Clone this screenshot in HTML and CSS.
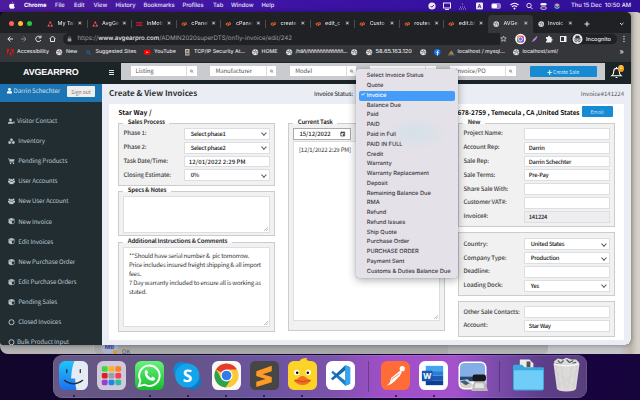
FILE: index.html
```html
<!DOCTYPE html>
<html lang="en">
<head>
<meta charset="utf-8">
<title>AVGEARPRO - Create &amp; View Invoices</title>
<link rel="stylesheet" href="styles.css">
</head>
<body>
<svg class="defs" aria-hidden="true">
  <symbol id="cp" viewBox="0 0 14 10"><path d="M7 3H4.500a2.200 2.200 0 0 0 0 4.400H6M7 9l1.800-7H10a2.200 2.200 0 0 1 0 4.400H8.500" fill="none" stroke="#ff6c2c" stroke-width="2"/></symbol>
  <symbol id="globe" viewBox="0 0 12 12"><circle cx="6" cy="6" r="5.700" fill="#e3e5e8"/><path d="M1.500 4l3 .5 1 2L4 8 3 10M7 1.500L6 3.500l2 1.500 2.500-1M8 7l2 .5L8.500 10" fill="none" stroke="#4b4d51" stroke-width="1.400"/></symbol>
  <symbol id="tri" viewBox="0 0 12 12"><path d="M6 0l3 5H3zM3 6l3 5H0zM9 6l3 5H6z" fill="#f0525a"/></symbol>
  <symbol id="mag" viewBox="0 0 12 12"><circle cx="5" cy="5" r="3.500" fill="none" stroke="currentColor" stroke-width="1.600"/><path d="M7.500 7.500L11 11" stroke="currentColor" stroke-width="2"/></symbol>
  <symbol id="cube" viewBox="0 0 12 12"><path d="M6 0l5.500 2v7L6 12 .5 9V2z" fill="#b8c7ce"/><path d="M6.800 6l4-1.700v4L6.800 10.500z" fill="#222d32"/><path d="M1.500 3L6 5l4.500-2" fill="none" stroke="#222d32" stroke-width=".7"/></symbol>
  <symbol id="ring" viewBox="0 0 12 12"><circle cx="6" cy="6" r="4.700" fill="none" stroke="#b8c7ce" stroke-width="1.800"/></symbol>
  <symbol id="users" viewBox="0 0 14 12"><g fill="#b8c7ce"><circle cx="3" cy="2.500" r="2"/><circle cx="11" cy="2.500" r="2"/><circle cx="7" cy="4" r="2.600"/><path d="M0 8V5h4l1 2-2 2H1zM14 8V5h-4L9 7l2 2h2zM3 12V8.500L5 7h4l2 1.500V12z"/></g></symbol>
  <symbol id="grip" viewBox="0 0 6 6"><path d="M0 6L6 0M3 6l3-3" stroke="#888" stroke-width=".8"/></symbol>
</svg>

<header class="menubar">
  <svg class="apple" viewBox="0 0 12 14"><path d="M8 0c.2 1.500-1 3-2.300 3C5.500 1.500 7 .3 8 0zM6 4c.8 0 1.500-.7 2.800-.7 1 0 1.900.5 2.400 1.300C9 6 9.300 9 11.600 10 11 11.800 9.700 13.700 8.500 13.700c-.9 0-1.300-.5-2.300-.5s-1.500.5-2.300.5C2 13.700.3 10.500.3 7.800.3 5 2 3.400 3.800 3.400 4.800 3.400 5.500 4 6 4z" fill="#fff"/></svg>
  <b class="m1">Chrome</b><span class="m2">File</span><span class="m3">Edit</span><span class="m4">View</span><span class="m5">History</span><span class="m6">Bookmarks</span><span class="m7">Profiles</span><span class="m8">Tab</span><span class="m9">Window</span><span class="m10">Help</span>
  <svg class="tray" viewBox="0 0 136 10"><g fill="none" stroke="#eee"><circle cx="4" cy="5" r="3.600" fill="#eee" stroke="none"/><path d="M2.500 5l1.200 1.200L6 4" stroke="#4a20a5" stroke-width="1"/><rect x="15.500" y="2" width="7" height="5"/><path d="M17 8.500h4"/><path d="M31 8h8M32 6h6M34 3h2" stroke-dasharray="1 1" opacity=".65"/></g><rect x="48" y="1.500" width="7" height="7" rx="1" fill="#eee"/><path d="M50 7l1.500-4L53 7M50.600 5.700h1.800" fill="none" stroke="#3c199b" stroke-width=".8"/><rect x="63.500" y="2.500" width="9" height="5" rx="1.500" fill="#8e78cb" stroke="#b6a6e0" stroke-width=".7"/><rect x="64" y="3" width="5" height="4" rx="1" fill="#fff"/><path d="M82.500 4q4-3.500 8 0M84 5.800q2.500-2 5 0" fill="none" stroke="#fff" stroke-width="1.100"/><circle cx="86.500" cy="7.500" r="1" fill="#fff"/><circle cx="101" cy="4.500" r="2.200" fill="none" stroke="#eee" stroke-width=".9"/><path d="M102.600 6.200l2 2" stroke="#eee"/><rect x="112.500" y="2" width="6" height="2.500" rx="1.200" fill="#eee"/><rect x="112.800" y="5.800" width="5.500" height="2.500" rx="1.200" fill="none" stroke="#eee" stroke-width=".8"/><circle cx="129" cy="5.200" r="3" fill="#344b8f"/><path d="M126.500 4q2.500-3 5 0l-2 2z" fill="#f08bc0"/><path d="M126.500 6q2.500 3 5 0" fill="none" stroke="#4be0e4"/></svg>
  <span class="clock">Thu 15 Dec&nbsp; 10:50 AM</span>
</header>

<div class="backwin back-right"></div>
<div class="backwin back-left"></div>
<div class="backwin back-chat"><span class="mb">MB</span><i class="dot"></i><span class="chat">Milan B<br>OK</span><span class="wed">Wed</span></div>

<main class="window">
  <div class="tabs">
    <div class="lights"><i class="red"></i><i class="yel"></i><i class="grn"></i></div>
    <div class="tab"><svg class="fv"><use href="#tri"/></svg><span>My Tas</span><em>✕</em></div>
    <div class="tab"><svg class="fv"><use href="#tri"/></svg><span>AvgGe</span><em>✕</em></div>
    <div class="tab"><svg class="fv" viewBox="0 0 12 12"><path d="M0 2h12v3H0zM0 7h12v3H0z" fill="#b4202c"/></svg><span>InMoti</span><em>✕</em></div>
    <div class="tab"><svg class="fv"><use href="#cp"/></svg><span>cPanel</span><em>✕</em></div>
    <div class="tab"><svg class="fv"><use href="#cp"/></svg><span>cPanel</span><em>✕</em></div>
    <div class="tab"><svg class="fv"><use href="#cp"/></svg><span>create</span><em>✕</em></div>
    <div class="tab"><svg class="fv"><use href="#cp"/></svg><span>edit_c</span><em>✕</em></div>
    <div class="tab"><svg class="fv"><use href="#cp"/></svg><span>Custo</span><em>✕</em></div>
    <div class="tab"><svg class="fv"><use href="#cp"/></svg><span>routes</span><em>✕</em></div>
    <div class="tab"><svg class="fv"><use href="#cp"/></svg><span>edit.bl</span><em>✕</em></div>
    <div class="tab active"><svg class="fv"><use href="#globe"/></svg><span>AVGe</span><em>✕</em></div>
    <div class="tab"><svg class="fv"><use href="#globe"/></svg><span>Invoic</span><em>✕</em></div>
    <svg class="tabend" viewBox="0 0 50 10"><path d="M3.500 5h5M6 2.500v5M39 4l1.700 1.700L42.400 4" fill="none" stroke="#e8eaed" stroke-width="1"/></svg>
  </div>
  <div class="toolbar">
    <svg class="nav" viewBox="0 0 60 12"><g fill="none" stroke="#e6e7e9" stroke-width="1"><path d="M13 6H8M10.300 3.500L7.800 6l2.500 2.500"/><path d="M21 6h5M23.500 3.500L26 6l-2.500 2.500" stroke="#85878a"/><path d="M40.500 4.200a2.700 2.700 0 1 0 .4 2.800M41 2.500v2.300h-2.300"/><path d="M49.500 6L52.500 3l3 3M50.500 5.500v3h4v-3"/></g></svg>
    <div class="url"><svg class="lock" viewBox="0 0 8 10"><rect x="1" y="4" width="6" height="5" fill="#9aa0a6"/><path d="M2.500 4V2.500a1.500 1.500 0 0 1 3 0V4" fill="none" stroke="#9aa0a6"/></svg><span>https://<strong>www.avgearpro.com</strong>/ADMIN2020superDTS/onfly-invoice/edit/242</span></div>
    <svg class="ext" viewBox="0 0 131 12"><path d="M3 3l.8 1.800 2 .2-1.500 1.300.5 2L3 7.300 1.200 8.300l.5-2L.2 5l2-.2z" transform="translate(.5)" fill="none" stroke="#dadce0" stroke-width=".7"/><circle cx="20.500" cy="6" r="5.300" fill="#fff"/><rect x="17" y="2.500" width="7" height="7" rx="2" fill="#e94389"/><path d="M17 6V4.500a2 2 0 0 1 2-2h1.500z" fill="#ffae36"/><path d="M20.500 9.500H19a2 2 0 0 1-2-2V6z" fill="#35b877"/><path d="M24 6v1.500a2 2 0 0 1-2 2h-1.500z" fill="#7c4af0"/><circle cx="20.500" cy="6" r="2" fill="#3c7fe8" stroke="#fff" stroke-width=".7"/><path d="M32.500 8.500L34 6l3-2.500-1.500 3z" fill="#ae80d8" stroke="#ae80d8"/><path d="M46 4h2q0-1.500 1-1.500T50 4h1.500v2q1.200 0 1.200.8t-1.200.9v1.800H46V7.800q1.200 0 1.200-.9T46 6z" fill="#eee"/><rect x="60.500" y="3.500" width="5.500" height="5" fill="none" stroke="#eee" stroke-width="1"/><rect x="64" y="3.500" width="2" height="5" fill="#eee"/><rect x="71" y=".7" width="46" height="10.600" rx="5.300" fill="#202124"/><circle cx="77.500" cy="6" r="5" fill="#e8eaed"/><path d="M73.800 5.800h7.400M76 3h3l.5 2h-4z" fill="#35363a" stroke="#35363a" stroke-width=".7"/><circle cx="76" cy="7.700" r="1.100" fill="none" stroke="#35363a" stroke-width=".7"/><circle cx="79" cy="7.700" r="1.100" fill="none" stroke="#35363a" stroke-width=".7"/><g fill="#e8eaed"><circle cx="124" cy="3.500" r=".65"/><circle cx="124" cy="6" r=".65"/><circle cx="124" cy="8.500" r=".65"/></g><text x="86" y="8.200" class="incog">Incognito</text></svg>
  </div>
  <nav class="bookmarks">
    <span class="k1"><svg viewBox="0 0 12 12"><path d="M0 0h4.500L0 11zM12 0H7.500L12 11zM6 4l3.500 8H7L6 9.500H3.800z" fill="#e8150f"/></svg>Accessibility</span>
    <span class="k2"><svg><use href="#globe"/></svg>New</span>
    <span class="k3"><svg class="blue"><use href="#mag"/></svg>Suggested Sites</span>
    <span class="k4"><svg viewBox="0 0 12 12"><rect y="1.500" width="12" height="9" rx="2" fill="#f00"/><path d="M4.500 4v4L8 6z" fill="#fff"/></svg>YouTube</span>
    <span class="k5"><svg viewBox="0 0 12 12"><path d="M2 0h8v12H2z" fill="#c9c2ba"/><path d="M4 2h4v3H4zM3 7h6v3H3z" fill="#775c51"/></svg>TCP/IP Security At...</span>
    <span class="k6"><svg><use href="#globe"/></svg>HOME</span>
    <span class="k7"><svg><use href="#globe"/></svg>/häñ/ññññññññññññ...</span>
    <span class="k8"><svg><use href="#globe"/></svg></span>
    <span class="k9"><svg><use href="#globe"/></svg>58.65.163.120</span>
    <span class="k10"><svg><use href="#globe"/></svg></span>
    <span class="k11"><svg viewBox="0 0 12 12"><circle cx="6" cy="6" r="5.800" fill="#1877f2"/><path d="M8.500 3H7.500Q6.500 3 6.500 4v8M4.500 6.500h4" fill="none" stroke="#fff" stroke-width="1.600"/></svg></span>
    <span class="k12"><svg viewBox="0 0 12 12"><path d="M2 9L5 3v6zM6 9V2l4 7z" fill="#f6961e"/><path d="M0 10h12v1.500H0z" fill="#888cc0"/></svg>localhost / mysql...</span>
    <span class="k13"><svg><use href="#globe"/></svg>localhost/xml/</span>
    <span class="k14">»</span>
  </nav>

  <div class="sitebar">
    <div class="brand">AVGEARPRO</div><i class="burger"></i>
    <div class="search">
      <label><span>Listing</span><svg><use href="#mag"/></svg></label>
      <label><span>Manufacturer</span><svg><use href="#mag"/></svg></label>
      <label><span>Model</span><svg><use href="#mag"/></svg></label>
      <label><span></span><svg><use href="#mag"/></svg></label>
      <label><span class="ipo">Invoice/PO</span><svg><use href="#mag"/></svg></label>
      <button class="create"><b>✚</b> Create Sale</button>
    </div>
    <div class="bell"><svg viewBox="0 0 12 14"><path d="M1 10.500Q3 9 3 5.500 3 2.500 6 2.500T9 5.500Q9 9 11 10.500zM5 12.500h2M6 1v1.500" fill="none" stroke="#fff" stroke-width="1.200"/></svg><i>0</i></div>
  </div>

  <div class="app">
    <aside>
      <div class="user"><svg viewBox="0 0 10 12"><circle cx="5" cy="3" r="2.800" fill="#fff"/><path d="M0 11V8q1-2 3-2l2 1 2-1q2 0 3 2v3z" fill="#fff"/></svg><span>Darrin Schechter</span><button>Sign out</button></div>
      <ul>
        <li class="tight"><svg viewBox="0 0 14 12"><g fill="#b8c7ce"><circle cx="5" cy="3.500" r="2.800"/><path d="M0 11V9q1-2 3-2h4q2 0 3 2v2zM10 6l2 1 1-1v5l-2-1z"/></g></svg>Visitor Contact</li>
        <li><svg viewBox="0 0 14 12"><g fill="#b8c7ce" stroke="#222d32" stroke-width=".8"><path d="M7 0l3 1.500v3.500L7 6.500 4 5V1.500zM3.500 5l3.300 1.700v3.500L3.500 12 .2 10.200V6.700zM10.500 5l3.300 1.700v3.500L10.500 12 7.200 10.200V6.700z"/></g></svg>Inventory</li>
        <li><svg viewBox="0 0 14 12"><path d="M0 1h2.500L4 8h8" fill="none" stroke="#b8c7ce" stroke-width="1.300"/><path d="M3 2h10l-1 4.500H4z" fill="#b8c7ce"/><circle cx="5" cy="10.500" r="1.300" fill="#b8c7ce"/><circle cx="11" cy="10.500" r="1.300" fill="#b8c7ce"/></svg>Pending Products</li>
        <li><svg><use href="#users"/></svg>User Accounts</li>
        <li><svg><use href="#users"/></svg>New User Account</li>
        <li><svg><use href="#cube"/></svg>New Invoice</li>
        <li><svg><use href="#cube"/></svg>Edit Invoices</li>
        <li><svg><use href="#cube"/></svg>New Purchase Order</li>
        <li><svg><use href="#cube"/></svg>Edit Purchase Orders</li>
        <li><svg><use href="#cube"/></svg>Pending Sales</li>
        <li><svg><use href="#ring"/></svg>Closed Invoices</li>
        <li class="tight"><svg><use href="#ring"/></svg>Bulk Product Input</li>
      </ul>
    </aside>
    <section class="content">
      <div class="head"><h1>Create &amp; View Invoices</h1><span class="status">Invoice Status:</span><span class="num">Invoice#141224</span></div>
      <div class="panel">
        <div class="customer"><b>Star Way /</b><b class="addr">678-2759 , Temecula , CA ,United States</b><button>Email</button></div>
        <div class="cols">
          <div class="col">
            <div class="box sales"><h2>Sales Process</h2>
              <div class="row"><span>Phase 1:</span><div class="in sel">Select phase1</div></div>
              <div class="row"><span>Phase 2:</span><div class="in sel">Select phase2</div></div>
              <div class="row"><span>Task Date/Time:</span><div class="in when">12/01/2022 2:29 PM</div></div>
              <div class="row"><span>Closing Estimate:</span><div class="in sel">0%</div></div>
            </div>
            <div class="box specs"><h2>Specs &amp; Notes</h2><div class="area"><svg><use href="#grip"/></svg></div></div>
            <div class="box notes"><h2>Additional Instructions &amp; Comments</h2><div class="area">**Should have serial number &amp;&nbsp; pic tomorrow.<br>Price includes insured freight shipping &amp; all import<br>fees.<br>7 Day warranty included to ensure all is working as<br>stated.<svg><use href="#grip"/></svg></div></div>
          </div>
          <div class="col">
            <div class="box task"><h2>Current Task</h2><div class="date">15/12/2022<svg viewBox="0 0 10 10"><path d="M1.500 2h7v6.500h-7zM1.500 3h7M3 .5V2M7 .5V2" fill="none" stroke="#111" stroke-width="1.200"/><path d="M5.500 5.500h2v2h-2z"/></svg></div><div class="area">[12/1/2022 2:29 PM]<svg><use href="#grip"/></svg></div></div>
          </div>
          <div class="col">
            <div class="box new"><h2>New</h2>
              <div class="row"><span>Project Name:</span><div class="in"></div></div>
              <div class="row"><span>Account Rep:</span><div class="in">Darrin</div></div>
              <div class="row"><span>Sale Rep:</span><div class="in">Darrin Schechter</div></div>
              <div class="row"><span>Sale Terms:</span><div class="in">Pre-Pay</div></div>
              <div class="row"><span>Share Sale With:</span><div class="in"></div></div>
              <div class="row"><span>Customer VAT#:</span><div class="in"></div></div>
              <div class="row"><span>Invoice#:</span><div class="in off">141224</div></div>
            </div>
            <div class="box ship">
              <div class="row"><span>Country:</span><div class="in sel">United States</div></div>
              <div class="row"><span>Company Type:</span><div class="in sel">Production</div></div>
              <div class="row"><span>Deadline:</span><div class="in"></div></div>
              <div class="row"><span>Loading Dock:</span><div class="in sel">Yes</div></div>
            </div>
            <div class="box acct">
              <div class="row"><span>Other Sale Contacts:</span><div class="in"></div></div>
              <div class="row"><span>Account:</span><div class="in">Star Way</div></div>
            </div>
          </div>
        </div>
      </div>
    </section>
  </div>
</main>

<ul class="popup">
  <li>Select Invoice Status</li><li>Quote</li><li class="on">Invoice</li><li>Balance Due</li><li>Paid</li><li>PAID</li><li>Paid in Full</li><li>PAID IN FULL</li><li>Credit</li><li>Warranty</li><li>Warranty Replacement</li><li>Deposit</li><li>Remaining Balance Due</li><li>RMA</li><li>Refund</li><li>Refund Issues</li><li>Ship Quote</li><li>Purchase Order</li><li>PURCHASE ORDER</li><li>Payment Sent</li><li>Customs &amp; Duties Balance Due</li>
</ul>

<footer class="dock">
  <div class="ic run"><svg viewBox="0 0 30 30"><defs><linearGradient id="fb" x2="0" y2="1"><stop stop-color="#20c5fb"/><stop offset="1" stop-color="#1d70f0"/></linearGradient></defs><rect width="30" height="30" rx="6.500" fill="url(#fb)"/><path d="M16 0h7.500A6.500 6.500 0 0 1 30 6.500v17a6.500 6.500 0 0 1-6.500 6.500H18q-1.500-6-1.300-12H12.500Q13 7 16 0z" fill="#e4ebf3"/><path d="M8 9v3M22 9v3M5.500 20q9.500 7.500 19 0" fill="none" stroke="#1e2a3c" stroke-width="1.300" stroke-linecap="round"/></svg></div>
  <div class="ic"><svg viewBox="0 0 30 30"><rect width="30" height="30" rx="6.500" fill="#cfc9da"/><g><rect x="5" y="5.500" width="6" height="5.500" rx="1.500" fill="#3bda3c"/><rect x="12" y="5.500" width="6" height="5.500" rx="1.500" fill="#f8b425"/><rect x="19" y="5.500" width="6" height="5.500" rx="1.500" fill="#fa8424"/><rect x="5" y="12.500" width="6" height="5.500" rx="1.500" fill="#db2222"/><rect x="12" y="12.500" width="6" height="5.500" rx="1.500" fill="#9aa0a8"/><rect x="19" y="12.500" width="6" height="5.500" rx="1.500" fill="#fb3b56"/><rect x="5" y="19.500" width="6" height="5.500" rx="1.500" fill="#9a3ed0"/><rect x="12" y="19.500" width="6" height="5.500" rx="1.500" fill="#2183f0"/><rect x="19" y="19.500" width="6" height="5.500" rx="1.500" fill="#24c295"/></g></svg></div>
  <div class="ic run"><svg viewBox="0 0 30 30"><defs><linearGradient id="wa" x2="0" y2="1"><stop stop-color="#68f27c"/><stop offset="1" stop-color="#12bd2c"/></linearGradient></defs><rect width="30" height="30" rx="6.500" fill="url(#wa)"/><path d="M4 26l1.600-5.700A10.600 10.600 0 1 1 9.800 24.500z" fill="none" stroke="#fff" stroke-width="2"/><path d="M10.500 10q1.500-1.500 2.300 0l.9 2.200-1.200 1.600q1.400 2.600 4 3.700l1.600-1.400 2.700 1.400q.3 2.500-2.700 3-3.400 0-6.200-3.300Q9.200 13 10.500 10z" fill="#fff"/></svg></div>
  <div class="ic run"><svg viewBox="0 0 30 30"><circle cx="9" cy="9.500" r="8.500" fill="#0d8bd6"/><circle cx="20.500" cy="21" r="8.500" fill="#0b78ca"/><circle cx="14.800" cy="15" r="12.500" fill="#12a5ea"/><text x="15" y="21.800" class="sk">S</text></svg></div>
  <div class="ic run"><svg viewBox="0 0 30 30"><rect width="30" height="30" rx="6.500" fill="#f8f8f8"/><circle cx="15" cy="15" r="12.500" fill="#fcc934"/><path d="M15 15L4.200 8.700A12.500 12.500 0 0 1 25.800 8.700H15z" fill="#e33b2e"/><path d="M4.200 8.700A12.500 12.500 0 0 0 14 27.500L20 18 9.500 17.500z" fill="#2da14e"/><circle cx="15" cy="15" r="6.300" fill="#fff"/><circle cx="15" cy="15" r="5" fill="#357be5"/></svg></div>
  <div class="ic run"><svg viewBox="0 0 30 30"><rect width="30" height="30" rx="5.500" fill="#464646"/><path d="M6.500 10.500L22.500 5v5.500L13 13.700l9.500 2.800v5.500L6.500 27v-5.500l9.500-3-9.500-3z" fill="#ff9a22"/></svg></div>
  <div class="ic run duck"><svg viewBox="0 -3 30 33"><path d="M6 0h6q1-3 8-3l-1 2 3 1h2a6 6 0 0 1 6 6v18a6 6 0 0 1-6 6H6a6 6 0 0 1-6-6V6a6 6 0 0 1 6-6z" fill="#fdd426"/><circle cx="9" cy="12" r="2.800" fill="#fff"/><circle cx="21" cy="12" r="2.800" fill="#fff"/><circle cx="9.500" cy="12.300" r="1.300"/><circle cx="20.500" cy="12.300" r="1.300"/><path d="M6 20q4-1 6-3.500 3-2 6 0 2 2.500 6 3.500-3 5-9 5T6 20z" fill="#ef7022"/><path d="M7 20q8 3 16 0" fill="none" stroke="#c34b17"/></svg></div>
  <div class="ic"><svg viewBox="0 0 30 30"><rect width="30" height="30" rx="6.500" fill="#fff"/><path d="M20 4.500l5 2v17l-5 2L5.500 12l1.500-1.800L20 20.500z" fill="#1c7dc7"/><path d="M20 4.500v5L7 20 5 18.300z" fill="#1669ae"/><path d="M20 4.500l5 2v17l-5 2z" fill="#35a5ec"/></svg></div>
  <i class="sep"></i>
  <div class="ic run"><svg viewBox="0 0 30 30"><rect width="30" height="30" rx="6.500" fill="#ff6c37"/><circle cx="22" cy="8" r="2.700" fill="#fff"/><path d="M20 9.800l-9.500 7.700-1.500 5L6 25.700l4.500-2 3-2.200 6-6 2-4z" fill="#fff"/><path d="M11 19l8-6M21 15l2-2" stroke="#ff6c37" stroke-width=".8"/></svg></div>
  <div class="ic run"><svg viewBox="0 0 30 30"><rect width="30" height="30" rx="6.500" fill="#fff"/><path d="M7 5h18v5.500H7z" fill="#41a5ee"/><path d="M7 10.500h18V15H7z" fill="#2b7cd3"/><path d="M7 15h18v5H7z" fill="#185abd"/><path d="M7 20h18v5H7z" fill="#103f91"/><rect x="3" y="10" width="11" height="11" rx="1" fill="#1c55ae"/><text x="8.500" y="18.500" class="wd">W</text></svg></div>
  <div class="ic"><svg viewBox="0 0 30 30"><rect x=".5" y=".5" width="29" height="29" rx="6" fill="#fff"/><path d="M2 7q0-5 5-5h16q5 0 5 5v9H2z" fill="#84aee6"/><path d="M2 16h26v5H2z" fill="#1e487d"/><path d="M2 20l8-1 6 6-3 3H7q-5 0-5-5z" fill="#d8d1c6"/><path d="M2 21l5-1 5 3-4 2z" fill="#3c5d82"/><path d="M17 20h11l3 11H14z" fill="#b9b9bb"/><rect x="15" y="14" width="14" height="7" rx="2.500" fill="#18191c"/><path d="M18 23h8l1 5H17z" fill="#e5e5e5"/></svg></div>
  <i class="sep"></i>
  <div class="ic wide"><svg viewBox="0 -2 32 32"><path d="M7-2h10l4 4v6H7z" fill="#ececec"/><path d="M14 0h4v6h-4z" fill="#555"/><path d="M0 5q0-1.500 1.500-1.500h8L12 6h18.500Q32 6 32 7.500V28q0 2-2 2H2q-2 0-2-2z" fill="#38a7dc"/><path d="M1 9h30v19q0 1-1 1H2q-1 0-1-1z" fill="#70cdf7"/></svg></div>
  <div class="ic bin"><svg viewBox="0 0 28 35"><path d="M1 4L5 1l5 1 4-2 5 2 5 0 3 3-2 5H3z" fill="#dcdcdc"/><path d="M5 3l3 3 3-3M14 2l3 3 4-2M20 6l4-1M3 6l4 1" fill="none" stroke="#4f6157" stroke-width="1.300"/><path d="M.5 6h27l-3.500 26q-1 3-10 3T4 32z" fill="#dcdad9"/><path d="M3 8l4 24M8 8l5 24M25 8l-4 24M20 8l-5 23M4 16l18 13M24 15L7 28" stroke="#cfcccd" stroke-width=".8"/><path d="M1 6.500q13 4 26 0" fill="none" stroke="#fff"/></svg></div>
</footer>
</body>
</html>
```
FILE: styles.css
```css
* { box-sizing: border-box; }
html, body { margin: 0; width: 640px; height: 400px; overflow: hidden; }
body {
  position: relative;
  background: linear-gradient(100deg, #12062c 0 60%, #1a0545 80%, #16043c);
  font-family: "Noto Sans CJK SC", "Noto Sans", sans-serif;
  font-size: 6px;
  line-height: 8px;
  white-space: nowrap;
  text-rendering: geometricPrecision;
}
.defs { position: absolute; width: 0; height: 0; }
svg { flex: none; overflow: visible; }
ul { list-style: none; margin: 0; padding: 0; }
button { border: 0; padding: 0; font: inherit; text-align: center; }
h1, h2 { margin: 0; }

/* System menu bar */
.menubar {
  display: flex; align-items: center;
  height: 12px; padding: 0 8px 1px 9px;
  background: linear-gradient(90deg, #4c1c9c, #3b13a5 50%, #30109a);
  color: #ece6f8;
  font: 500 5.8px/10px Inter, sans-serif;
}
.apple { width: 6px; height: 7px; margin-right: 9px; }
.menubar b, .menubar span { flex: none; }
.m1 { width: 31px; color: #fff; }
.m2 { width: 19px; } .m3 { width: 19.5px; } .m4 { width: 22px; } .m5 { width: 28px; }
.m6 { width: 39px; } .m7 { width: 30.5px; } .m8 { width: 18px; } .m9 { width: 30.5px; } .m10 { width: 15px; }
.tray { width: 136px; height: 10px; margin-left: auto; margin-right: 7px; }
.clock { width: 61px; }

/* Windows lying behind the browser */
.backwin { position: absolute; }
.back-right { left: 400px; top: 12px; width: 244px; height: 342px; background: linear-gradient(90deg, #c4c5c8 90%, #bbb7ad 94.5%, #d2cdc4 97%, #d5d1ca 98%); border-radius: 0 8px 6px 0; }
.back-left { left: 0; top: 330px; width: 548px; height: 24px; background: linear-gradient(#999, #b5b5b5); border-radius: 0 0 5px 8px; }
.back-chat { left: 93px; top: 330px; width: 355px; height: 24px; background: linear-gradient(#999, #aaa); border-radius: 0 0 0 5px; border-left: 1px solid #bbb; overflow: hidden; color: #555; }
.mb { position: absolute; left: 7px; top: 8px; width: 17px; height: 17px; border-radius: 9px; background: #aab3cc; color: #3a45a0; font: 700 6px/20px Inter, sans-serif; text-align: center; }
.dot { position: absolute; left: 19px; top: 20px; width: 4px; height: 4px; border-radius: 2px; background: #dd9a20; }
.chat { position: absolute; left: 28px; top: 8px; line-height: 9px; }
.wed { position: absolute; left: 123px; top: 10px; color: #777; font-size: 5px; }

/* Browser */
.window {
  position: absolute; left: 0; top: 12px; width: 631px; height: 333px;
  overflow: hidden; border-radius: 5px 5px 6px 4px;
  display: flex; flex-direction: column;
  background: #202124; box-shadow: 0 0 5px #0006;
}
.tabs { display: flex; height: 20.5px; flex: none; align-items: stretch; padding-top: 2.5px; color: #dcdee1; font: 500 5.4px/8px Inter, sans-serif; }
.lights { display: flex; gap: 4px; align-items: center; width: 42px; flex: none; padding-left: 9px; }
.lights i { width: 5px; height: 5px; border-radius: 50%; }
.red { background: #ff5f57; } .yel { background: #febc2e; } .grn { background: #28c840; }
.tab { display: flex; align-items: center; width: 44.6px; flex: none; padding-left: 5px; border-radius: 4px 4px 0 0; position: relative; }
.tab + .tab::before { content: ""; position: absolute; left: 0; top: 5px; width: 1px; height: 8px; background: #4a4c50; }
.tab.active { background: #35363a; }
.tab.active::before, .tab.active + .tab::before { display: none; }
.tab span { width: 17.5px; overflow: hidden; margin: 0 2.5px 0 4px; mask-image: linear-gradient(90deg, #000 65%, transparent); }
.tab em { font: 700 5.5px/8px "DejaVu Sans", sans-serif; color: #e4e5e8; }
.fv { width: 6.5px; height: 6px; }
.tabend { width: 50px; height: 10px; margin: 4px 0 0 4px; }
.toolbar { display: flex; align-items: center; height: 12px; flex: none; background: #35363a; }
.nav { width: 60px; height: 12px; }
.url { display: flex; align-items: center; flex: 1; height: 12px; margin-left: 3px; padding-left: 4px; border-radius: 6px 0 0 6px; background: #202124; color: #9aa0a6; font: 6.13px/10px Inter, sans-serif; }
.url strong { color: #e8eaed; font-weight: 500; }
.lock { width: 5px; height: 6px; margin-right: 5.5px; }
.ext { width: 131px; height: 12px; }
.incog { font: 500 5.6px Inter, sans-serif; fill: #e8eaed; }
.bookmarks { display: flex; align-items: center; height: 17px; flex: none; padding: 0 0 2px 7px; background: #35363a; color: #e3e5e8; font: 500 5.25px/8px Inter, sans-serif; }
.bookmarks span { display: flex; align-items: center; flex: none; }
.bookmarks svg { width: 6.5px; height: 6.5px; margin-right: 3.5px; }
.bookmarks .blue { color: #1c72d8; width: 5px; height: 5px; margin-right: 4.5px; }
.k1 { width: 49px; } .k2 { width: 30px; } .k3 { width: 58px; } .k4 { width: 40px; } .k5 { width: 67.5px; }
.k6 { width: 34px; } .k7 { width: 65.5px; letter-spacing: -.2px; } .k8 { width: 14.5px; } .k9 { width: 54px; font-size: 5.6px; } .k10 { width: 14px; }
.k11 { width: 14px; } .k12 { width: 65px; } .k13 { width: 107px; } .k14 { font-size: 7px; }

/* Site header */
.sitebar { display: flex; align-items: flex-start; height: 22px; flex: none; background: #1b2427; }
.brand { width: 109px; padding-left: 23px; color: #fff; font: 700 8.9px/20px "Liberation Sans", sans-serif; letter-spacing: -.12px; }
.burger { width: 5.5px; height: 5px; margin: 8px 7px 0 0; border: solid #dfe3e5; border-width: 1px 0; background: linear-gradient(#dfe3e5, #dfe3e5) 0 1px / 100% 1px no-repeat; flex: none; }
.search { display: flex; align-items: center; gap: 13.8px; width: 484px; height: 17px; margin-top: 1px; padding-left: 9.5px; background: #c9cbce; flex: none; }
.search label { display: flex; align-items: center; width: 66px; height: 10.5px; padding-left: 5px; background: #fff; color: #555; font-size: 6px; letter-spacing: -.07px; flex: none; }
.search label span { flex: 1; }
.search label svg { width: 10.5px; height: 10.5px; padding: 3px; border-left: 1px solid #ddd; color: #333; }
.search .ipo { margin-left: 1px; }
.create { width: 67px; height: 11px; border-radius: 1px; background: #178ad4; color: #d9efff; font-size: 5px; line-height: 11px; }
.bell { position: relative; width: 26px; height: 20px; padding: 4px 0 0 5.5px; }
.bell svg { width: 11px; height: 13px; }
.bell i { position: absolute; left: 13px; top: 3px; width: 6px; height: 7px; border-radius: 3px; background: #f39c12; color: #fff; font: 5px/7px Inter, sans-serif; text-align: center; }

/* Application */
.app { display: flex; flex: 1; min-height: 0; }
aside { width: 102px; flex: none; background: #222d32; color: #b8c7ce; overflow: hidden; }
.user { display: flex; align-items: center; height: 18.5px; padding: 0 7px 3px 7px; background: #1d74b2; color: #cfe4f2; font-size: 6.2px; letter-spacing: -.12px; }
.user svg { width: 5px; height: 6px; margin-right: 1.5px; }
.user button { width: 28px; height: 11px; margin-left: auto; margin-top: 1px; border-radius: 1px; background: #eee; color: #777; font-size: 5px; line-height: 10px; letter-spacing: 0; }
aside ul { padding-top: 8.8px; }
aside li { display: flex; align-items: center; height: 20.15px; padding-left: 7.5px; font-size: 6.2px; letter-spacing: -.12px; }
aside li svg { width: 7px; height: 6.5px; margin-right: 3.7px; }
aside li.tight svg { margin-right: 2.4px; }
.content { flex: 1; display: flex; flex-direction: column; background: #eaeef4; padding: 0 7px 5.5px; }
.head { display: flex; align-items: center; height: 20.7px; flex: none; color: #555; }
.head h1 { width: 205px; color: #333; font-size: 8px; line-height: 10px; font-weight: 700; }
.status { font-weight: 500; color: #444; font-size: 6px; letter-spacing: -.2px; }
.num { margin-left: auto; font-size: 6px; }
.panel { flex: 1; background: #fff; padding: 1.5px 8.5px 0 9.3px; display: flex; flex-direction: column; }
.customer { display: flex; align-items: center; height: 12px; flex: none; color: #111; font-size: 6.75px; }
.customer .addr { margin-left: auto; font-size: 6.5px; letter-spacing: -.07px; }
.customer button { width: 31px; height: 11px; margin: 0 3px 0 2px; border-radius: 1px; background: #178ad4; color: #bfe2f8; font-size: 5px; line-height: 10px; }
.cols { display: grid; grid-template-columns: repeat(3, 156.5px); gap: 13.5px; padding-top: 5.5px; }
.col { display: flex; flex-direction: column; gap: 5.7px; }
.box { position: relative; border: 1px solid #ccc; background: #f1f1f2; padding: 3.8px 4px 0 4.2px; }
.box h2 { position: absolute; left: 4px; top: -6px; height: 8px; padding: 0 4.5px; background: linear-gradient(#fff 70%, transparent 70%); font-size: 6px; letter-spacing: -.22px; line-height: 8px; color: #333; font-weight: 700; }
.sales { height: 62.4px; } .specs { height: 45.2px; } .notes { height: 90px; }
.task { height: 208px; } .new { height: 103.5px; } .ship { height: 63.2px; padding-top: 5px; } .acct { height: 35.5px; padding-top: 4px; }
.row { display: flex; align-items: center; justify-content: space-between; height: 13.8px; color: #444; font-size: 6px; letter-spacing: -.11px; font-weight: 500; padding-bottom: 2px; }
.row > span { margin-top: -1px; }
.in { width: 86px; height: 11.8px; border: 1px solid #dcdee3; background: #fff; padding-left: 4px; color: #222; font-size: 5.8px; line-height: 10px; letter-spacing: -.27px; position: relative; flex: none; }
.in.when { font-size: 6px; letter-spacing: .06px; }
.off { background: #eee; }
.in.sel { padding-left: 6px; }
.sel::after { content: ""; position: absolute; right: 3px; top: 2.5px; width: 2.8px; height: 2.8px; border: solid #555; border-width: 0 .8px .8px 0; transform: rotate(45deg); }
.area { position: relative; border: 1px solid #dcdee6; background: #fff; color: #333; padding: 3px 4.5px; font-size: 6px; letter-spacing: -.17px; line-height: 9px; }
.area svg { position: absolute; right: 1px; bottom: 1px; width: 4px; height: 4px; }
.specs .area { height: 37px; } .notes .area { height: 80px; }
.task .area { height: 180px; margin-top: 1px; }
.date { display: flex; align-items: center; justify-content: space-between; width: 58px; height: 12px; border: 1px solid #aaa; background: #fff; padding: 0 5px; color: #222; font-size: 6px; letter-spacing: -.1px; font-weight: 500; }
.date svg { width: 5.5px; height: 6px; }

/* Status menu */
.popup { position: absolute; left: 356px; top: 68.5px; width: 101.5px; height: 209.5px; padding: 2.9px 3px; border-radius: 3px; background: radial-gradient(ellipse 32px 16px at 60px 64px, #d4e0e8, transparent), #e4e1e8; box-shadow: 0 2px 8px #0005, 0 0 1px #0006; color: #3b393f; font: 500 5.7px/9.78px Inter, sans-serif; }
.popup li { height: 9.78px; padding-left: 7.8px; position: relative; }
.popup .on { background: #439cfa; color: #fff; border-radius: 2px; }
.popup .on::before { content: "✓"; position: absolute; left: 1.5px; font-size: 5.5px; }

/* Dock */
.dock { position: absolute; left: 53px; top: 354.5px; width: 534px; height: 43px; border-radius: 9px; display: flex; align-items: flex-start; gap: 9.15px; padding: 6px 6px 0; background: linear-gradient(90deg, #675783, #635486 22%, #6c54a0 40%, #7b52ab 52%, #a04fc8 62%, #a352cc 75%, #7b4cab 83%, #5c3d87 92%, #58407c); box-shadow: inset 0 0 0 .5px #fff3; }
.ic { position: relative; width: 29px; height: 29px; flex: none; }
.ic svg { display: block; width: 29px; height: 29px; }
.run::after { content: ""; position: absolute; left: 13.5px; top: 34px; width: 2px; height: 2px; border-radius: 1px; background: #1c1030; }
.sep { width: 1px; height: 31px; margin: 0 3.5px; background: #0004; flex: none; }
.duck svg { height: 32px; margin-top: -3px; }
.wide, .wide svg { width: 31px; }
.wide svg { height: 32px; margin-top: -2px; }
.bin, .bin svg { width: 27px; }
.bin svg { height: 35px; margin-top: -3.5px; }
.sk { font: 700 18px "Open Sans", sans-serif; fill: #fff; text-anchor: middle; }
.wd { font: 700 8.5px Inter, sans-serif; fill: #fff; text-anchor: middle; }
```
